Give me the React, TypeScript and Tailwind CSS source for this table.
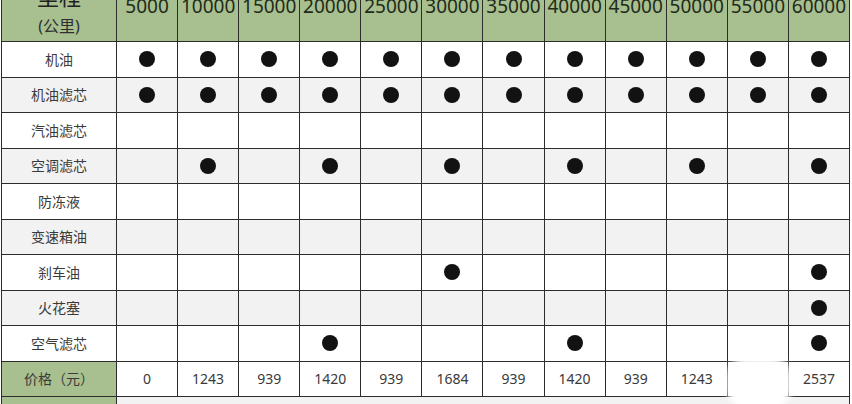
import React from 'react';

const KM = [5000, 10000, 15000, 20000, 25000, 30000, 35000, 40000, 45000, 50000, 55000, 60000];
const ALL = KM.map(() => true);
const at = (...idx: number[]) => KM.map((_, i) => idx.includes(i));

const ITEMS = [
  { name: '机油', marks: ALL },
  { name: '机油滤芯', marks: ALL },
  { name: '汽油滤芯', marks: at() },
  { name: '空调滤芯', marks: at(1, 3, 5, 7, 9, 11) },
  { name: '防冻液', marks: at() },
  { name: '变速箱油', marks: at() },
  { name: '刹车油', marks: at(5, 11) },
  { name: '火花塞', marks: at(11) },
  { name: '空气滤芯', marks: at(3, 7, 11) },
];

const PRICES = ['0', '1243', '939', '1420', '939', '1684', '939', '1420', '939', '1243', '', '2537'];

export default function App() {
  return (
    <div className="relative w-[852px] h-[404px] overflow-hidden bg-white font-['Noto_Sans','Noto_Sans_CJK_SC',sans-serif] text-[#3a3a3a]">
      <div className="ml-px w-[849px] grid grid-cols-[114px_repeat(12,1fr)] grid-rows-[41px_repeat(10,34.5px)_30px] gap-px px-px bg-[#2c2c2c]">
        {/* header */}
        <div className="bg-[#a8bf8f] flex flex-col items-center overflow-hidden">
          <span className="text-[22px] leading-none -mt-[15px] text-[#222]">里程</span>
          <span className="text-[16px] leading-none mt-[11px] text-[#2f2f2f]">(公里)</span>
        </div>
        {KM.map((k) => (
          <div key={k} className="bg-[#a8bf8f] flex justify-center overflow-hidden">
            <span className="text-[19px] leading-none -mt-[3px] text-[#1f2b1a]">{k}</span>
          </div>
        ))}

        {/* maintenance items */}
        {ITEMS.map((item, r) => {
          const bg = r % 2 === 1 ? 'bg-[#f2f2f2]' : 'bg-white';
          return (
            <React.Fragment key={item.name}>
              <div className={`${bg} flex items-center justify-center text-[14px]`}>{item.name}</div>
              {item.marks.map((m, i) => (
                <div key={i} className={`${bg} flex items-center justify-center`}>
                  {m && <span className="w-[16px] h-[16px] rounded-full bg-[#121212]" />}
                </div>
              ))}
            </React.Fragment>
          );
        })}

        {/* price */}
        <div className="bg-[#a8bf8f] flex items-center justify-center text-[14px]">价格（元）</div>
        {PRICES.map((p, i) => (
          <div key={i} className="bg-white flex items-center justify-center text-[14px]">{p}</div>
        ))}

        <div className="bg-[#a8bf8f]" />
        <div className="col-span-12 bg-[#f2f2f2]" />
      </div>

      {/* watermark smudge */}
      <div className="absolute left-[727px] top-[357px] w-[64px] h-[52px] rounded-[20px] bg-white blur-[3px]" />
    </div>
  );
}
